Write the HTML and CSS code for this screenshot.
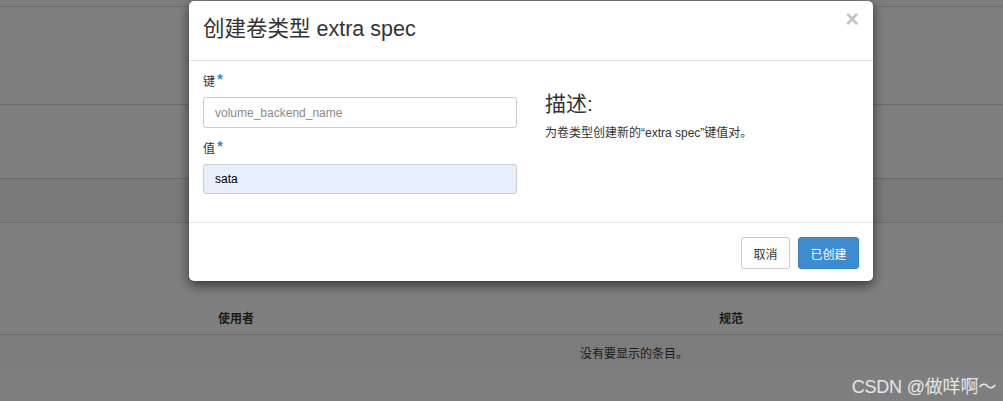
FILE: index.html
```html
<!DOCTYPE html>
<html lang="zh">
<head>
<meta charset="utf-8">
<title>创建卷类型 extra spec</title>
<link rel="stylesheet" href="styles.css">
</head>
<body>
<div class="page">
  <div class="row r-top"></div>
  <div class="row r-a"></div>
  <div class="row r-b"></div>
  <div class="row r-c"></div>
  <div class="row r-head">
    <span class="th th-user">使用者</span>
    <span class="th th-spec">规范</span>
  </div>
  <div class="row r-empty"><span class="empty">没有要显示的条目。</span></div>
  <div class="row r-foot"><span class="mark">CSDN @做咩啊～</span></div>
</div>

<div class="modal">
  <div class="modal-header">
    <h3 class="modal-title">创建卷类型 extra spec</h3>
    <span class="close">×</span>
  </div>
  <div class="modal-body">
    <div class="left">
      <label class="lbl">键 <span class="req">*</span></label>
      <input class="field" type="text" placeholder="volume_backend_name">
      <label class="lbl lbl2">值 <span class="req">*</span></label>
      <input class="field filled" type="text" value="sata">
    </div>
    <div class="right">
      <h3 class="desc-title">描述:</h3>
      <p class="desc">为卷类型创建新的“extra spec”键值对。</p>
    </div>
  </div>
  <div class="modal-footer">
    <button class="btn btn-default">取消</button>
    <button class="btn btn-primary">已创建</button>
  </div>
</div>
</body>
</html>
```

FILE: styles.css
```css
* { box-sizing: border-box; }
html, body { margin: 0; padding: 0; }
body {
  width: 1003px;
  height: 401px;
  overflow: hidden;
  background: #7f7f7f;
  font-family: "Liberation Sans", "Noto Sans CJK SC", sans-serif;
  font-size: 12px;
  color: #333;
  position: relative;
}
.page { display: flex; flex-direction: column; }
.row { border-bottom: 1px solid #6c6c6c; position: relative; }
.r-top { height: 7px; background: #7d7d7d; }
.r-a { height: 98px; }
.r-b { height: 74px; }
.r-c { height: 44px; background: #7a7a7a; }
.r-head { height: 112px; }
.th { font-weight: bold; color: #1a1a1a; font-size: 12px; position: absolute; bottom: 8px; }
.th-user { left: 218px; }
.th-spec { left: 719px; }
.r-empty { height: 34px; background: #7c7c7c; border-bottom: none; }
.empty { position: absolute; left: 580px; top: 9px; color: #1a1a1a; font-size: 12px; }
.r-foot { flex: 1; height: 33px; border-bottom: none; }
.mark {
  position: absolute;
  right: 7px;
  top: 3px;
  font-size: 18px;
  color: #e6e6e6;
  letter-spacing: -0.2px;
}

.modal {
  position: absolute;
  left: 189px;
  top: 1px;
  width: 684px;
  height: 280px;
  background: #fff;
  border-radius: 5px;
  box-shadow: 0 4px 12px rgba(0,0,0,0.6);
  display: flex;
  flex-direction: column;
}
.modal-header {
  height: 60px;
  border-bottom: 1px solid #e5e5e5;
  display: flex;
  align-items: center;
  justify-content: space-between;
  padding: 0 14px 0 14px;
}
.modal-title {
  margin: 0;
  font-weight: normal;
  font-size: 21.5px;
  color: #333;
  line-height: 1;
  margin-top: -2px;
}
.close {
  font-size: 23px;
  font-weight: bold;
  color: #c4c4c4;
  line-height: 1;
  margin-top: -22px;
}
.modal-body {
  height: 162px;
  border-bottom: 1px solid #e5e5e5;
  display: flex;
  padding: 12px 14px 0 14px;
  gap: 28px;
}
.left { width: 314px; display: flex; flex-direction: column; }
.lbl { display: block; font-size: 12px; color: #333; line-height: 16px; height: 16px; }
.lbl2 { margin-top: 12px; }
.req { color: #2f86d0; font-size: 14px; font-weight: bold; position: relative; top: -2px; margin-left: -1px; }
.field {
  display: block;
  width: 314px;
  height: 31px;
  margin-top: 8px;
  border: 1px solid #ccc;
  border-radius: 3px;
  padding: 0 11px;
  font-family: inherit;
  font-size: 12px;
  color: #000;
  background: #fff;
  outline: none;
}
.field::placeholder { color: #8a8a8a; }
.filled { background: #e8f0fe; height: 30px; }
.right { flex: 1; padding-top: 18px; }
.desc-title { margin: 0; font-weight: normal; font-size: 21px; line-height: 26px; color: #333; }
.desc { margin: 8px 0 0 0; font-size: 12px; color: #333; line-height: 16px; }
.modal-footer {
  flex: 1;
  display: flex;
  justify-content: flex-end;
  align-items: flex-start;
  padding: 14px 14px 0 14px;
  gap: 8px;
}
.btn {
  height: 32px;
  font-family: inherit;
  font-size: 12px;
  border-radius: 3px;
  padding: 0 10px;
  cursor: pointer;
}
.btn-default { background: #fff; border: 1px solid #ccc; color: #333; width: 49px; }
.btn-primary { background: #3d8ccf; border: 1px solid #3a84c4; color: #fff; width: 61px; }
```
